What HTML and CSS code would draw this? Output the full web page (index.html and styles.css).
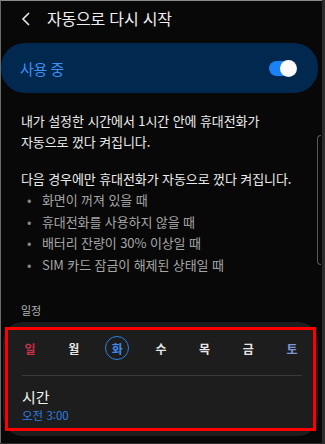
FILE: index.html
```html
<!DOCTYPE html>
<html lang="ko">

<head>
    <meta charset="UTF-8">
    <meta name="viewport" content="width=device-width, initial-scale=1.0">
    <title>자동으로 다시 시작</title>
    <link rel="stylesheet" href="styles.css">
</head>

<body>
    <div class="screen">
        <div class="header">
            <svg class="back" width="10" height="14" viewBox="0 0 10 14">
                <path d="M8 1 L2 7 L8 13" fill="none" stroke="#e8e8e8" stroke-width="1.6"/>
            </svg>
            <span class="title">자동으로 다시 시작</span>
        </div>

        <div class="switch-card">
            <span class="switch-label">사용 중</span>
            <span class="toggle"><span class="knob"></span></span>
        </div>

        <div class="desc">
            <p>내가 설정한 시간에서 1시간 안에 휴대전화가<br>자동으로 껐다 켜집니다.</p>
            <p>다음 경우에만 휴대전화가 자동으로 껐다 켜집니다.</p>
            <ul class="cond">
                <li>화면이 꺼져 있을 때</li>
                <li>휴대전화를 사용하지 않을 때</li>
                <li>배터리 잔량이 30% 이상일 때</li>
                <li>SIM 카드 잠금이 해제된 상태일 때</li>
            </ul>
        </div>

        <div class="sub-title">일정</div>

        <div class="sched-card">
            <div class="mark">
                <div class="days">
                    <span class="day sun">일</span>
                    <span class="day">월</span>
                    <span class="day on">화</span>
                    <span class="day">수</span>
                    <span class="day">목</span>
                    <span class="day">금</span>
                    <span class="day sat">토</span>
                </div>
                <div class="line"></div>
                <div class="time-row">
                    <div class="time-label">시간</div>
                    <div class="time-val">오전 3:00</div>
                </div>
            </div>
        </div>

        <div class="scroll"></div>
    </div>
</body>

</html>
```

FILE: styles.css
```css
html,
body {
    margin: 0;
    padding: 0;
    background-color: #2c2c2c;
}

body {
    width: 325px;
    height: 444px;
    overflow: hidden;
}

.screen {
    position: relative;
    width: 322px;
    height: 443px;
    background-color: #080808;
    border-top: 1px solid #8c8c8c;
    border-left: 1px solid #6a6a6a;
    box-sizing: border-box;
    font-family: "Noto Sans CJK KR", "Noto Sans", sans-serif;
    color: #ececec;
}

ul,
p {
    margin: 0;
    padding: 0;
}

.header {
    display: flex;
    align-items: center;
    height: 34px;
    padding-left: 20px;
}

.back {
    margin-top: 1px;
}

.title {
    margin-left: 16px;
    font-size: 16px;
    letter-spacing: -0.2px;
    color: #f0f0f0;
}

.switch-card {
    display: flex;
    align-items: center;
    justify-content: space-between;
    height: 50px;
    margin: 8px 4px 0 0;
    padding: 0 22px 0 19px;
    border-radius: 24px;
    background-color: #01284e;
}

.switch-label {
    font-size: 15px;
    color: #3d8ff0;
    letter-spacing: -0.4px;
}

.toggle {
    position: relative;
    width: 27px;
    height: 15px;
    border-radius: 8px;
    background-color: #1a82f5;
}

.knob {
    position: absolute;
    right: -1px;
    top: -1px;
    width: 17px;
    height: 17px;
    border-radius: 50%;
    background-color: #fafafa;
}

.desc {
    padding: 17px 0 0 20px;
    font-size: 13px;
    line-height: 21px;
    letter-spacing: -0.1px;
}

.desc p {
    margin-bottom: 16px;
}

.desc p + p {
    margin-bottom: 0;
}

.cond li {
    list-style: none;
    line-height: 21.5px;
    color: #a6a6a6;
    padding-left: 21px;
    position: relative;
}

.cond li::before {
    content: "•";
    position: absolute;
    left: 6px;
    color: #8a8a8a;
}

.sub-title {
    margin: 27px 0 0 20px;
    font-size: 11px;
    color: #b4b4b4;
}

.sched-card {
    margin: 4px 4px 0 2px;
    padding: 5px 2px 5px 2px;
    border-radius: 20px;
    background-color: #1d1d1d;
}

.mark {
    border: 3px solid #ff0000;
    padding: 6px 0 0 0;
    height: 92px;
}

.days {
    display: flex;
    justify-content: space-between;
    padding: 0 9px 0 10px;
}

.day {
    display: flex;
    align-items: center;
    justify-content: center;
    width: 24px;
    height: 24px;
    font-size: 12px;
    font-weight: bold;
    color: #e6e6e6;
}

.day.sun {
    color: #c8304a;
}

.day.sat {
    color: #7e96d6;
}

.day.on {
    box-sizing: border-box;
    border: 1.5px solid #2f7fe2;
    border-radius: 50%;
    color: #3f8cf0;
}

.line {
    height: 1px;
    margin: 15px 11px 0 14px;
    background-color: #3a3a3a;
}

.time-row {
    padding: 11px 0 0 14px;
}

.time-label {
    font-size: 15px;
    line-height: 20px;
    color: #f0f0f0;
}

.time-val {
    font-size: 11.5px;
    line-height: 16px;
    color: #2f7fe2;
}

.scroll {
    position: absolute;
    left: 316px;
    top: 134px;
    width: 4px;
    height: 130px;
    border: 1px solid #5a5a5a;
    border-right: none;
    border-radius: 4px 0 0 4px;
    box-sizing: border-box;
}
```
